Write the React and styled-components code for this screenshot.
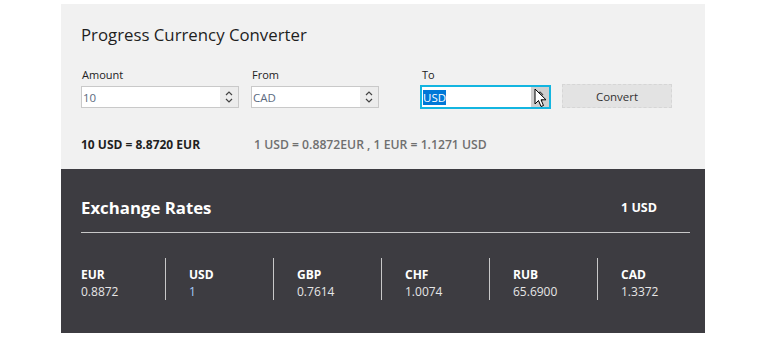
import React from "react";
import styled, { createGlobalStyle, css } from "styled-components";

const GlobalStyle = createGlobalStyle`
  body {
    margin: 0;
    background: #ffffff;
    font-family: "Open Sans", "Noto Sans", sans-serif;
  }
`;

const Panel = styled.div`
  width: 644px;
  margin: 4px 0 0 61px;
`;

const Converter = styled.section`
  height: 165px;
  box-sizing: border-box;
  padding: 19px 20px 0 20px;
  background: #f1f1f1;
`;

const Title = styled.h1`
  margin: 0;
  font-size: 16.8px;
  line-height: 24px;
  font-weight: 400;
  color: #1e1e1e;
`;

const Form = styled.div`
  display: flex;
  align-items: flex-end;
  margin-top: 20px;
`;

const Field = styled.div`
  display: flex;
  flex-direction: column;
  flex-shrink: 0;
  width: ${(p) => p.$col}px;
`;

const Label = styled.label`
  font-size: 11px;
  line-height: 16px;
  color: #222;
  margin: 0 0 3px 1px;
`;

const Spin = styled.div`
  display: flex;
  height: 22px;
  box-sizing: border-box;
  width: ${(p) => p.$w}px;
  background: #fff;
  border: 1px solid #c9c9c9;
  ${(p) =>
    p.$focus &&
    css`
      border-color: #13b5e0;
      box-shadow: 0 0 0 1px #13b5e0;
    `}
`;

const Value = styled.div`
  flex: 1;
  display: flex;
  align-items: center;
  padding-left: 1px;
  font-size: 11.5px;
  color: #5b6a80;
`;

const Selected = styled.span`
  background: #0078d7;
  color: #fff;
  line-height: 15px;
`;

const Arrows = styled.div`
  position: relative;
  width: 18px;
  display: flex;
  align-items: center;
  justify-content: center;
  background: ${(p) => (p.$hover ? "#cfcfcf" : "#ececec")};
`;

const Cursor = styled.svg`
  position: absolute;
  left: 3px;
  top: 1px;
`;

const Button = styled.button`
  flex-shrink: 0;
  width: 110px;
  height: 24px;
  margin-left: 12px;
  background: #e3e3e3;
  border: 1px dashed #d6d6d6;
  font-family: inherit;
  font-size: 11.5px;
  color: #333;
  padding: 0;
`;

const Result = styled.div`
  display: flex;
  margin-top: 29px;
  font-size: 12px;
  line-height: 16px;
  font-weight: 700;
`;

const Main = styled.span`
  width: 173px;
  color: #1f1f1f;
`;

const Rates = styled.span`
  color: #6f6f6f;
  font-weight: 600;
  font-size: 12.2px;
`;

const Board = styled.section`
  height: 164px;
  box-sizing: border-box;
  padding: 26px 15px 0 20px;
  background: #3d3c41;
  color: #fff;
`;

const BoardHead = styled.div`
  display: flex;
  justify-content: space-between;
  align-items: center;
  padding: 0 33px 13px 0;
  height: 24px;
  border-bottom: 1px solid #c8c8c8;
`;

const BoardTitle = styled.h2`
  margin: 0;
  font-size: 16.8px;
  font-weight: 700;
`;

const Base = styled.span`
  font-size: 12.5px;
  font-weight: 700;
`;

const Currencies = styled.div`
  display: flex;
  margin-top: 25px;
`;

const Currency = styled.div`
  flex-shrink: 0;
  width: 84px;
  padding-top: 8px;
  & + & {
    border-left: 1px solid #c8c8c8;
    padding-left: 23px;
  }
`;

const Code = styled.div`
  font-size: 12px;
  line-height: 17px;
  font-weight: 700;
  color: #fff;
`;

const Rate = styled.div`
  font-size: 12px;
  line-height: 17px;
  color: ${(p) => (p.$base ? "#a6cdfb" : "#e6e6e6")};
`;

const Chevrons = () => (
  <svg width="10" height="16" viewBox="0 0 10 16" fill="none" stroke="#444" strokeWidth="1.2">
    <path d="M2 6 L5 3 L8 6" />
    <path d="M2 10 L5 13 L8 10" />
  </svg>
);

const rates = [
  { code: "EUR", rate: "0.8872" },
  { code: "USD", rate: "1", base: true },
  { code: "GBP", rate: "0.7614" },
  { code: "CHF", rate: "1.0074" },
  { code: "RUB", rate: "65.6900" },
  { code: "CAD", rate: "1.3372" },
];

export default function App() {
  return (
    <>
      <GlobalStyle />
      <Panel>
        <Converter>
          <Title>Progress Currency Converter</Title>
          <Form>
            <Field $col={170}>
              <Label>Amount</Label>
              <Spin $w={158}>
                <Value>10</Value>
                <Arrows>
                  <Chevrons />
                </Arrows>
              </Spin>
            </Field>
            <Field $col={170}>
              <Label>From</Label>
              <Spin $w={128}>
                <Value>CAD</Value>
                <Arrows>
                  <Chevrons />
                </Arrows>
              </Spin>
            </Field>
            <Field $col={129}>
              <Label>To</Label>
              <Spin $w={129} $focus>
                <Value>
                  <Selected>USD</Selected>
                </Value>
                <Arrows $hover>
                  <Chevrons />
                  <Cursor width="14" height="22" viewBox="0 0 14 22">
                    <path
                      d="M1 1 L1 16 L4.5 12.5 L7 18.5 L9.5 17.5 L7 11.8 L12 11.8 Z"
                      fill="#fff"
                      stroke="#000"
                      strokeWidth="1"
                      strokeLinejoin="round"
                    />
                  </Cursor>
                </Arrows>
              </Spin>
            </Field>
            <Button>Convert</Button>
          </Form>
          <Result>
            <Main>10 USD = 8.8720 EUR</Main>
            <Rates>1 USD = 0.8872EUR , 1 EUR = 1.1271 USD</Rates>
          </Result>
        </Converter>
        <Board>
          <BoardHead>
            <BoardTitle>Exchange Rates</BoardTitle>
            <Base>1 USD</Base>
          </BoardHead>
          <Currencies>
            {rates.map((r) => (
              <Currency key={r.code}>
                <Code>{r.code}</Code>
                <Rate $base={r.base}>{r.rate}</Rate>
              </Currency>
            ))}
          </Currencies>
        </Board>
      </Panel>
    </>
  );
}
